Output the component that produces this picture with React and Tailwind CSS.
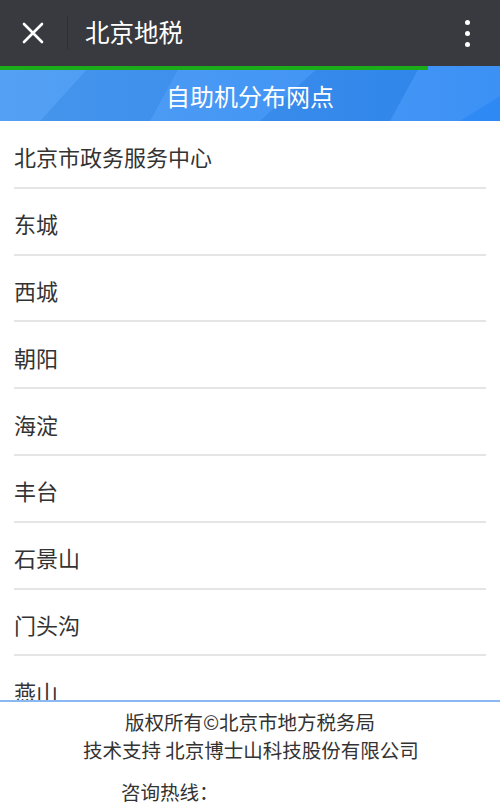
import React from "react";

const items = ["北京市政务服务中心", "东城", "西城", "朝阳", "海淀", "丰台", "石景山", "门头沟", "燕山"];

export default function App() {
  const font = { fontFamily: '"Noto Sans CJK SC", "Noto Sans", sans-serif' };
  return (
    <div className="relative w-[500px] h-[806px] overflow-hidden bg-white" style={font}>
      {/* top bar */}
      <div className="h-[66px] bg-[#393a3f] flex items-center">
        <div className="w-[67px] h-full flex items-center justify-center">
          <svg width="22" height="22" viewBox="0 0 22 22" className="ml-[-2px]">
            <path d="M2 2 L20 20 M20 2 L2 20" stroke="#ffffff" strokeWidth="2.6" strokeLinecap="round" />
          </svg>
        </div>
        <div className="w-px h-[34px] bg-[#2e2f33]" />
        <div className="ml-[17px] text-white text-[24.5px] leading-none pb-[1px]">北京地税</div>
        <div className="ml-auto mr-[30px] flex flex-col gap-[6px]">
          <div className="w-[5px] h-[5px] rounded-full bg-white" />
          <div className="w-[5px] h-[5px] rounded-full bg-white" />
          <div className="w-[5px] h-[5px] rounded-full bg-white" />
        </div>
      </div>
      {/* banner */}
      <div className="relative h-[55px] bg-gradient-to-r from-[#4a9bf4] to-[#2e89f5] overflow-hidden">
        <svg className="absolute inset-0" width="500" height="55" viewBox="0 0 500 55">
          <polygon points="0,0 90,0 40,55 0,55" fill="#ffffff" opacity="0.06" />
          <polygon points="90,0 180,0 150,55 40,55" fill="#000000" opacity="0.03" />
          <polygon points="180,0 320,0 260,55 150,55" fill="#ffffff" opacity="0.05" />
          <polygon points="320,0 420,0 390,55 260,55" fill="#000000" opacity="0.04" />
          <polygon points="420,0 500,0 500,30 460,55 390,55" fill="#ffffff" opacity="0.07" />
        </svg>
        <div className="absolute left-0 top-0 h-[4px] w-[428px] bg-[#1aad19]" />
        <div className="relative h-full flex items-center justify-center pt-[4px] text-white text-[24px] leading-none">
          自助机分布网点
        </div>
      </div>
      {/* list */}
      <div className="px-[14px] pt-[1px]">
        {items.map((t, i) => (
          <div
            key={t}
            className="h-[66.8px] flex items-center pt-[4px] border-b-2 border-[#e5e5e5] text-[22px] leading-none text-[#333333]"
          >
            {t}
          </div>
        ))}
      </div>
      {/* footer */}
      <div className="absolute left-0 bottom-0 w-full h-[106px] bg-white border-t-2 border-[#8ab9f2] text-[19.5px] leading-none text-[#333333]">
        <div className="text-center mt-[10px]">版权所有©北京市地方税务局</div>
        <div className="mt-[8px] pl-[83px]">技术支持 北京博士山科技股份有限公司</div>
        <div className="mt-[23px] pl-[121px]">咨询热线：</div>
      </div>
    </div>
  );
}
